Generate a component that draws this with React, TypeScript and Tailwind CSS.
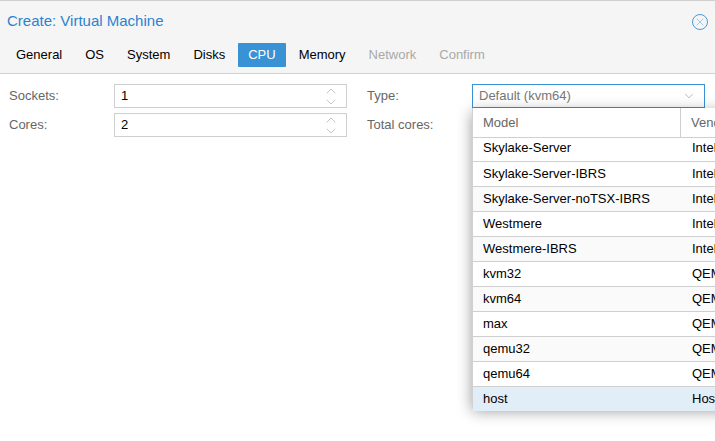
import { ChevronDown, ChevronUp, X } from 'lucide-react';

const rows = [
  ['Skylake-Server-IBRS', 'Intel'],
  ['Skylake-Server-noTSX-IBRS', 'Intel'],
  ['Westmere', 'Intel'],
  ['Westmere-IBRS', 'Intel'],
  ['kvm32', 'QEMU'],
  ['kvm64', 'QEMU'],
  ['max', 'QEMU'],
  ['qemu32', 'QEMU'],
  ['qemu64', 'QEMU'],
];

const tabs = ['General', 'OS', 'System', 'Disks', 'CPU', 'Memory', 'Network', 'Confirm'];

const Spinner = () => (
  <div className="flex flex-col items-center text-[#a8a8a8] mr-[7px]">
    <ChevronUp size={16} strokeWidth={1} className="-mb-[5px]" />
    <ChevronDown size={16} strokeWidth={1} />
  </div>
);

export default function App() {
  return (
    <div className="relative w-[715px] h-[441px] overflow-hidden bg-white text-[13px] text-black font-['Liberation_Sans',sans-serif]">
      {/* Header */}
      <div className="h-[74px] bg-[#f5f5f5] border-t border-[#d0d0d0] border-b">
        <div className="flex items-center justify-between pl-[7px] pr-[7px] pt-[4px] h-[36px]">
          <span className="text-[15px] text-[#2b83d0]">Create: Virtual Machine</span>
          <div className="flex items-center justify-center w-4 h-4 mt-[2px] rounded-full border border-[#4a9bd9] text-[#4a9bd9]">
            <X size={12} strokeWidth={1} />
          </div>
        </div>
        <div className="flex items-center pl-[6px] mt-[6px]">
          {tabs.map((t, i) => (
            <div
              key={t}
              className={`h-6 px-[10px] mr-[3px] flex items-center rounded-[1px] ${
                t === 'CPU' ? 'bg-[#3892d4] text-white' : i > 5 ? 'text-[#a9a9a9]' : 'text-black'
              }`}
            >
              {t}
            </div>
          ))}
        </div>
      </div>

      {/* Form */}
      <div className="flex pl-[9px] pt-[10px]">
        <div className="w-[338px] flex flex-col gap-[5px]">
          {[['Sockets:', '1'], ['Cores:', '2']].map(([label, value]) => (
            <div key={label} className="flex items-center h-6">
              <span className="w-[105px] text-[#666666]">{label}</span>
              <div className="w-[233px] h-6 border border-[#cfcfcf] flex items-center justify-between pl-[6px]">
                <span>{value}</span>
                <Spinner />
              </div>
            </div>
          ))}
        </div>
        <div className="ml-[20px] flex flex-col gap-[5px]">
          <div className="flex items-center h-6">
            <span className="w-[105px] text-[#666666]">Type:</span>
            <div className="w-[233px] h-6 border border-[#3892d4] flex items-center justify-between pl-[6px] pr-[8px] text-[#777777]">
              <span>Default (kvm64)</span>
              <ChevronDown size={14} strokeWidth={1} className="text-[#888888]" />
            </div>
          </div>
          <div className="flex items-center h-6 text-[#666666]">Total cores:</div>
        </div>
      </div>

      {/* Dropdown */}
      <div className="absolute left-[472px] top-[108px] w-[300px] h-[299px] bg-white border-l border-b border-[#d0d0d0] shadow-[0_4px_14px_rgba(0,0,0,0.4)]">
        <div className="flex h-[30px] border-b border-[#cfcfcf] text-[#666666]">
          <div className="w-[208px] border-r border-[#cfcfcf] pl-[10px] flex items-center">Model</div>
          <div className="pl-[10px] flex items-center">Vendor</div>
        </div>
        <div className="h-[24px] overflow-hidden border-b border-[#cfcfcf] flex items-end">
          <div className="w-[208px] pl-[10px] pb-[4px]">Skylake-Server</div>
          <div className="pl-[11px] pb-[4px]">Intel</div>
        </div>
        {rows.map(([m, v], i) => (
          <div key={m} className={`flex items-center h-[25px] border-b border-[#cfcfcf] ${i % 2 === 1 ? 'bg-[#fafafa]' : ''}`}>
            <div className="w-[208px] pl-[10px]">{m}</div>
            <div className="pl-[11px]">{v}</div>
          </div>
        ))}
        <div className="flex items-center h-[24px] bg-[#e1edf7]">
          <div className="w-[208px] pl-[10px]">host</div>
          <div className="pl-[11px]">Host</div>
        </div>
      </div>
    </div>
  );
}
